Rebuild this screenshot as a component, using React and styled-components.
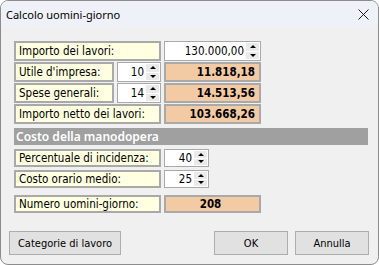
import React from 'react'
import styled, { createGlobalStyle } from 'styled-components'

const GlobalStyle = createGlobalStyle`
  html, body {
    margin: 0;
    padding: 0;
    background: #ffffff;
  }
  * { box-sizing: border-box; }
`

const FONT = `"DejaVu Sans Condensed", "Liberation Sans", sans-serif`

// Window frame
const Window = styled.div`
  width: 379px;
  height: 265px;
  border: 1px solid #8c8c8c;
  border-radius: 8px;
  overflow: hidden;
  background: #f0f0f0;
  display: flex;
  flex-direction: column;
`

const TitleBar = styled.div`
  height: 26px;
  background: #eef2f8;
  display: flex;
  align-items: center;
  justify-content: space-between;
  padding: 0 9px 0 5px;
  font-family: "Noto Sans", "Open Sans", sans-serif;
  font-size: 11px;
  color: #000;
`

const Body = styled.div`
  flex: 1;
  padding: 14px 9px 0 8px;
  display: flex;
  flex-direction: column;
`

const Form = styled.div`
  margin-left: 5px;
  display: flex;
  flex-direction: column;
  gap: 1px;
  font-family: ${FONT};
  font-size: 11.5px;
`

const Row = styled.div`
  display: flex;
  gap: 3px;
  height: ${p => p.h || 20}px;
  margin-top: ${p => p.mt || 0}px;
`

const Label = styled.div`
  width: ${p => p.w}px;
  height: 100%;
  background: #ffffe1;
  border: 2px solid #a9a9a9;
  display: flex;
  align-items: center;
  padding-left: 3px;
  color: #000;
  white-space: nowrap;
`

const Value = styled.div`
  width: 97px;
  height: 100%;
  background: #f2caa4;
  border: 2px solid #a9a9a9;
  display: flex;
  align-items: center;
  justify-content: ${p => (p.center ? 'center' : 'flex-end')};
  padding-right: 4px;
  font-weight: bold;
  font-size: 11.5px;
  color: #000;
`

const Spin = styled.div`
  width: ${p => p.w}px;
  height: 100%;
  background: #fff;
  border: 1px solid #a9a9a9;
  display: flex;
  align-items: center;
  padding: 1px;
`

const SpinText = styled.div`
  flex: 1;
  text-align: right;
  padding-right: 2px;
  color: #000;
`

const SpinButtons = styled.div`
  width: 13px;
  height: 100%;
  display: flex;
  flex-direction: column;
  gap: 1px;
`

const SpinBtn = styled.div`
  flex: 1;
  background: #eaeaea;
  display: flex;
  align-items: center;
  justify-content: center;
`

const Arrow = styled.div`
  width: 0;
  height: 0;
  border-left: 3px solid transparent;
  border-right: 3px solid transparent;
  ${p => (p.down ? 'border-top: 3px solid #000;' : 'border-bottom: 3px solid #000;')}
`

const Section = styled.div`
  width: 354px;
  height: 17px;
  margin-top: 3px;
  background: #a0a0a0;
  color: #fff;
  font-family: "Noto Sans", "Open Sans", sans-serif;
  font-weight: 600;
  font-size: 12px;
  display: flex;
  align-items: center;
  padding-left: 2px;
`

const Buttons = styled.div`
  margin-top: 18px;
  display: flex;
  align-items: center;
  font-family: ${FONT};
  font-size: 11px;
`

const Button = styled.button`
  width: ${p => p.w}px;
  height: 24px;
  margin-left: ${p => p.ml || 0}px;
  background: #e1e1e1;
  border: 1px solid #adadad;
  font-family: inherit;
  font-size: inherit;
  color: #000;
  padding: 0;
`

const Spacer = styled.div`
  flex: 1;
`

function Spinner({ w, value }) {
  return (
    <Spin w={w}>
      <SpinText>{value}</SpinText>
      <SpinButtons>
        <SpinBtn><Arrow /></SpinBtn>
        <SpinBtn><Arrow down /></SpinBtn>
      </SpinButtons>
    </Spin>
  )
}

function CloseIcon() {
  return (
    <svg width="11" height="11" viewBox="0 0 11 11">
      <path d="M0.5 0.5 L10.5 10.5 M10.5 0.5 L0.5 10.5" stroke="#1a1a1a" strokeWidth="1" />
    </svg>
  )
}

export default function App() {
  return (
    <>
      <GlobalStyle />
      <Window>
        <TitleBar>
          <span>Calcolo uomini-giorno</span>
          <CloseIcon />
        </TitleBar>
        <Body>
          <Form>
            <Row>
              <Label w={147}>Importo dei lavori:</Label>
              <Spinner w={97} value="130.000,00" />
            </Row>
            <Row>
              <Label w={100}>Utile d'impresa:</Label>
              <Spinner w={44} value="10" />
              <Value>11.818,18</Value>
            </Row>
            <Row>
              <Label w={100}>Spese generali:</Label>
              <Spinner w={44} value="14" />
              <Value>14.513,56</Value>
            </Row>
            <Row>
              <Label w={147}>Importo netto dei lavori:</Label>
              <Value>103.668,26</Value>
            </Row>
            <Section>Costo della manodopera</Section>
            <Row h={18} mt={3}>
              <Label w={147}>Percentuale di incidenza:</Label>
              <Spinner w={45} value="40" />
            </Row>
            <Row h={18} mt={2}>
              <Label w={147}>Costo orario medio:</Label>
              <Spinner w={45} value="25" />
            </Row>
            <Row h={18} mt={6}>
              <Label w={147}>Numero uomini-giorno:</Label>
              <Value center>208</Value>
            </Row>
          </Form>
          <Buttons>
            <Button w={112}>Categorie di lavoro</Button>
            <Spacer />
            <Button w={74}>OK</Button>
            <Button w={74} ml={7}>Annulla</Button>
          </Buttons>
        </Body>
      </Window>
    </>
  )
}
